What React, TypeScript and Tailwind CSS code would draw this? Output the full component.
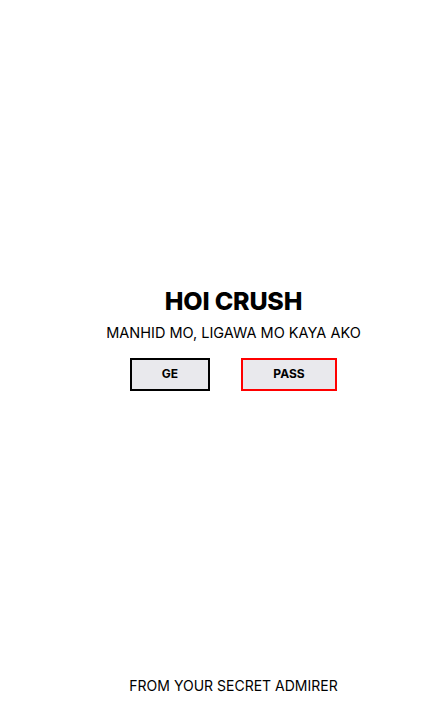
import React from 'react';

const App = () => {
  return (
    <div className="flex h-[711px] flex-col bg-white pl-[21px] text-black font-['Inter','Liberation_Sans',sans-serif]">
      <main className="flex flex-1 flex-col items-center justify-center pt-[17px]">
        <h1 className="text-[25px] font-extrabold leading-[30px] tracking-[-0.2px]">HOI CRUSH</h1>
        <p className="mt-[7px] text-[14.5px] leading-[20px]">MANHID MO, LIGAWA MO KAYA AKO</p>
        <div className="mt-[15px] flex gap-[31px]">
          <button className="h-[33px] w-[80px] border-2 border-black bg-[#e9e9ed] text-[12px] font-bold">
            GE
          </button>
          <button className="h-[33px] w-[96px] border-2 border-[#ff0000] bg-[#e9e9ed] text-[12px] font-bold">
            PASS
          </button>
        </div>
      </main>
      <footer className="flex h-[52px] items-center justify-center text-[14px]">
        FROM YOUR SECRET ADMIRER
      </footer>
    </div>
  );
};

export default App;
